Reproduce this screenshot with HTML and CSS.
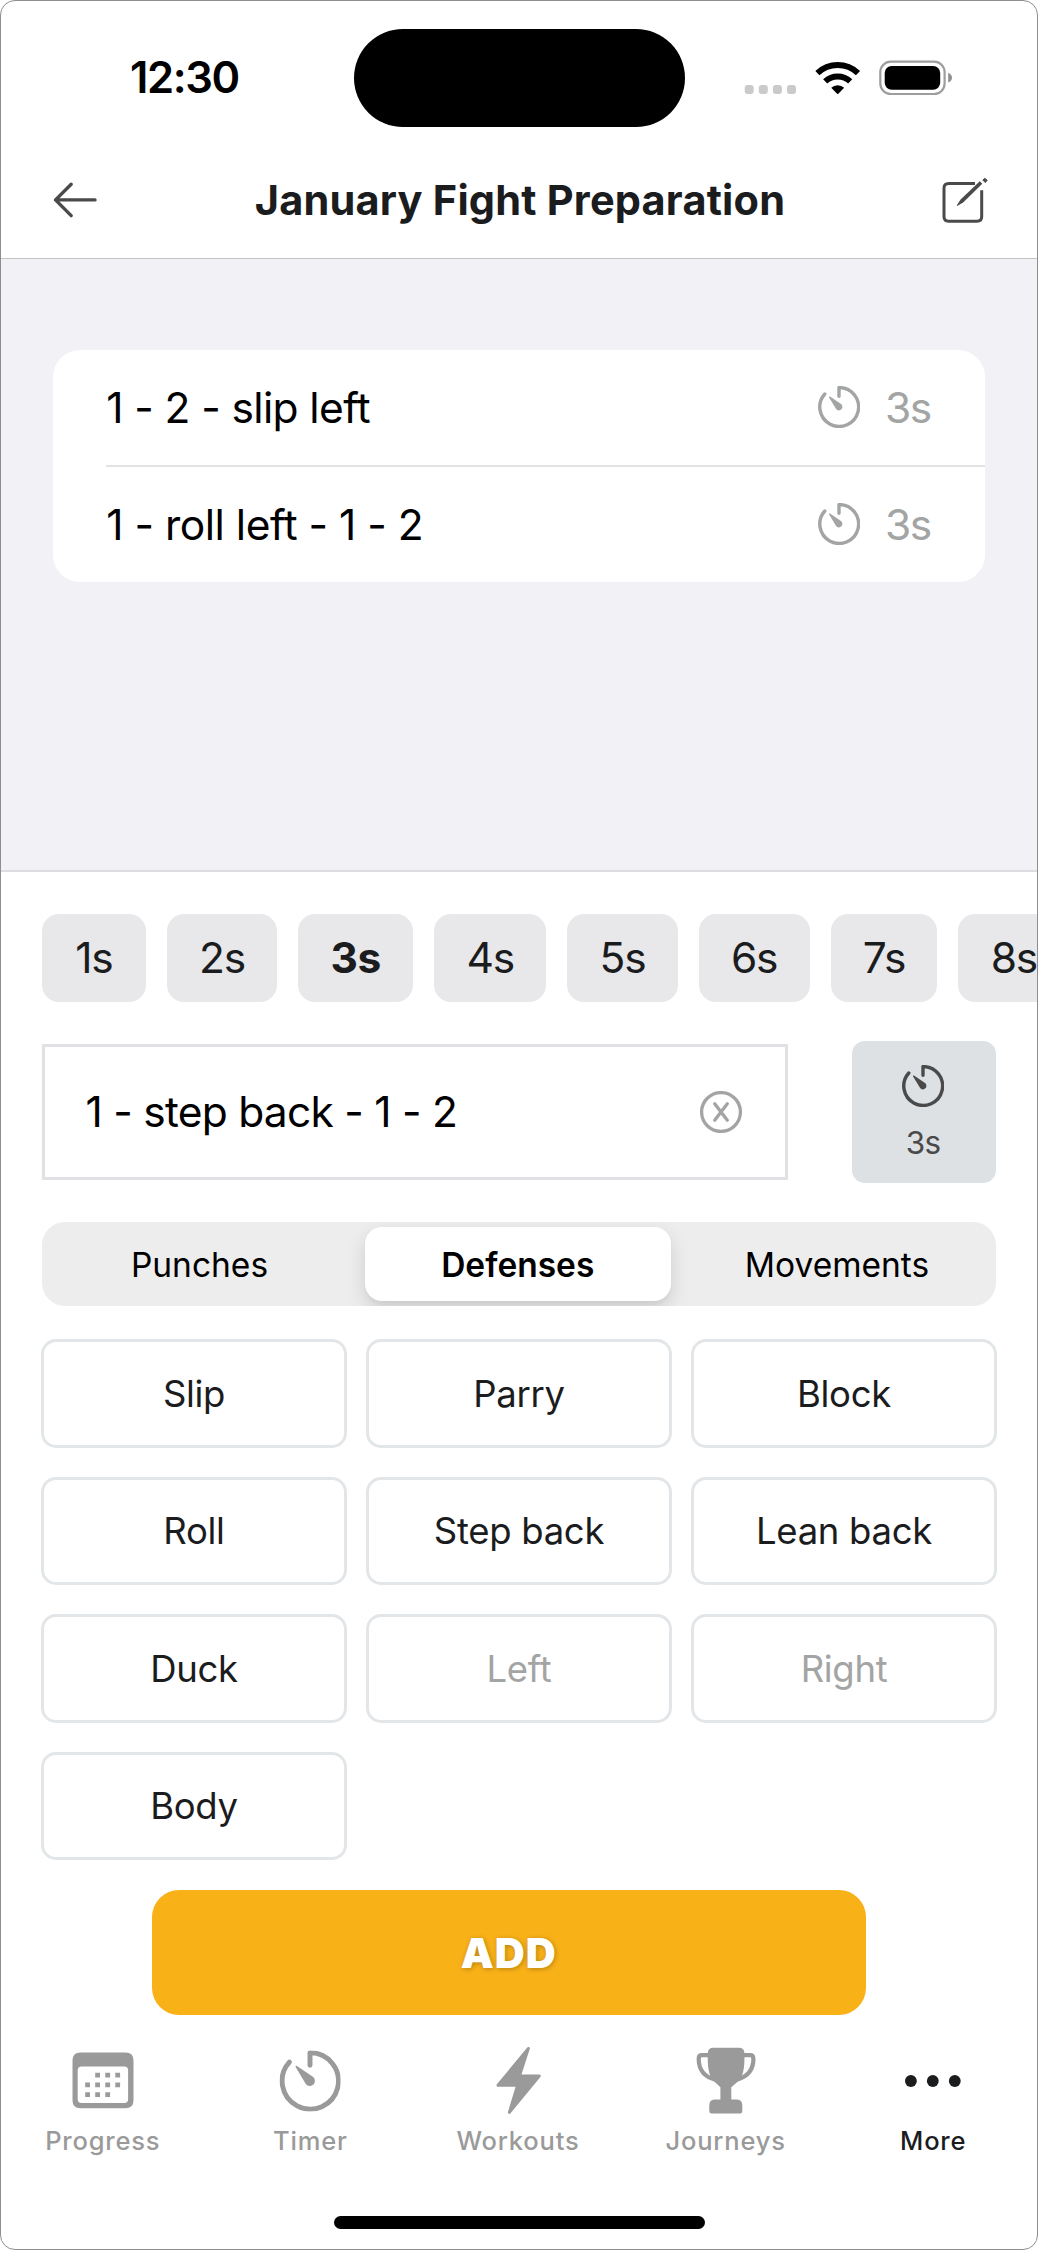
FILE: index.html
```
<!DOCTYPE html>
<html lang="en">
<head>
<meta charset="utf-8">
<title>January Fight Preparation</title>
<link rel="stylesheet" href="styles.css">
</head>
<body>
<svg width="0" height="0" class="defs">
  <symbol id="timer" viewBox="-21 -21 42 42">
    <path d="M0 -10.8V-19.4A19.4 19.4 0 1 1 -14.2 -13" fill="none" stroke="currentColor" stroke-width="3.4" stroke-linecap="round" stroke-linejoin="round"/>
    <path d="M-9.9 -9.6C-10.2 -10.2 -9.6 -10.8 -9 -10.4L2 -2.9A3.5 3.5 0 1 1 -2.9 2Z" fill="currentColor"/>
  </symbol>
</svg>
<div class="phone">
  <header class="status">
    <span class="time">12:30</span>
    <span class="island"></span>
    <svg class="status-icons" viewBox="744 58 210 38" width="210" height="38">
      <g fill="#cacaca">
        <rect x="744.7" y="84" width="9" height="9" rx="3"/><rect x="758.8" y="84" width="9" height="9" rx="3"/><rect x="772.9" y="84" width="9" height="9" rx="3"/><rect x="787" y="84" width="9" height="9" rx="3"/>
      </g>
      <g fill="none" stroke="#000" stroke-width="6">
        <path d="M817.4 72.1A29.5 29.5 0 0 1 858 72.1"/>
        <path d="M825.2 80.4A18.3 18.3 0 0 1 850.2 80.4"/>
      </g>
      <path d="M831.2 86.8A9.4 9.4 0 0 1 844.2 86.8L838.3 92.7Q837.7 93.3 837.1 92.7Z"/>
      <rect x="880.3" y="60.6" width="64.3" height="32.4" rx="10.5" fill="none" stroke="#9d9d9d" stroke-width="2.2"/>
      <rect x="884.7" y="65" width="55.5" height="23.8" rx="7"/>
      <path d="M948.2 71.8Q952 73.6 952 76.7Q952 79.8 948.2 81.6Z" fill="#8f8f8f"/>
    </svg>
  </header>

  <nav class="navbar">
    <svg class="back" viewBox="0 0 46 38" width="46" height="38"><path d="M18.2 3.2L2.5 18.9L18.2 34.6M2.5 18.9H42" fill="none" stroke="#4a4a4a" stroke-width="3.4" stroke-linecap="round" stroke-linejoin="round"/></svg>
    <h1>January Fight Preparation</h1>
    <svg class="edit" viewBox="0 0 48 48" width="48" height="48">
      <path d="M34 6.6H7.7Q3 6.6 3 11.3V39.6Q3 44.3 7.7 44.3H36Q40.7 44.3 40.7 39.6V13.3" fill="none" stroke="#4a4a4a" stroke-width="3"/>
      <path d="M38.8 4.3L41.3 6.8L22.4 25.2L16.2 28.9Q15.7 28.8 16 28.1L19.6 22.6Z" fill="#4a4a4a"/>
      <path d="M41.8 3.1L43.6 1.3L46.2 3.2L44.3 5.6Z" fill="#4a4a4a" stroke="#4a4a4a" stroke-width="1" stroke-linejoin="round"/>
    </svg>
  </nav>

  <main class="combos">
    <ul class="card">
      <li class="combo"><span>1 - 2 - slip left</span><svg class="clock"><use href="#timer"/></svg><span class="secs">3s</span></li>
      <li class="combo"><span class="tight">1 - roll left - 1 - 2</span><svg class="clock"><use href="#timer"/></svg><span class="secs">3s</span></li>
    </ul>
  </main>

  <section class="composer">
    <div class="chips">
      <button class="chip w104">1s</button><button class="chip w110">2s</button><button class="chip w115 on">3s</button><button class="chip w112">4s</button><button class="chip w110">5s</button><button class="chip w111">6s</button><button class="chip w107">7s</button><button class="chip w111">8s</button>
    </div>
    <div class="entry">
      <div class="field">
        <span>1 - step back - 1 - 2</span>
        <svg viewBox="-21 -21 42 42" width="42" height="42"><g fill="none" stroke="#a3a4a4" stroke-width="3.3" stroke-linecap="round"><circle r="19.4"/><path d="M-6.3 -8.2L6.3 8.2M6.3 -8.2L-6.3 8.2"/></g></svg>
      </div>
      <button class="duration"><svg class="clock"><use href="#timer"/></svg><span>3s</span></button>
    </div>
    <div class="segment">
      <span class="first">Punches</span><span class="active">Defenses</span><span>Movements</span>
    </div>
    <div class="moves">
      <button>Slip</button><button>Parry</button><button>Block</button>
      <button>Roll</button><button>Step back</button><button>Lean back</button>
      <button>Duck</button><button disabled>Left</button><button disabled>Right</button>
      <button>Body</button>
    </div>
    <button class="add">ADD</button>
  </section>

  <footer class="tabs">
    <div class="tab">
      <svg viewBox="0 0 70 70" width="70" height="70">
        <path fill-rule="evenodd" d="M12.5 6.5H57.5Q65.5 6.5 65.5 14.5V54.2Q65.5 62.2 57.5 62.2H12.5Q4.5 62.2 4.5 54.2V14.5Q4.5 6.5 12.5 6.5ZM13.5 20.5Q9.7 20.5 9.7 24.3V53.2Q9.7 57 13.5 57H56.3Q60.1 57 60.1 53.2V24.3Q60.1 20.5 56.3 20.5Z"/>
        <path d="M27.2 26.7h4.8v4.8h-4.8zM37.3 26.7h4.8v4.8h-4.8zM47.3 26.7h4.8v4.8h-4.8zM17.2 36.4h4.8v4.8h-4.8zM27.2 36.4h4.8v4.8h-4.8zM37.3 36.4h4.8v4.8h-4.8zM47.3 36.4h4.8v4.8h-4.8zM17.2 46.3h4.8v4.8h-4.8zM27.2 46.3h4.8v4.8h-4.8zM37.3 46.3h4.8v4.8h-4.8z"/>
      </svg>
      <span>Progress</span>
    </div>
    <div class="tab"><svg viewBox="-24.1 -24.1 48.2 48.2" width="70" height="70"><use href="#timer" x="-21" y="-21" width="42" height="42"/></svg><span>Timer</span></div>
    <div class="tab">
      <svg viewBox="0 0 70 70" width="70" height="70"><path stroke="currentColor" stroke-width="3" stroke-linejoin="round" d="M45.4 2.4L15 39.3H34.6L26.4 66.4L56.2 30H36.4Z"/></svg>
      <span>Workouts</span>
    </div>
    <div class="tab">
      <svg viewBox="0 0 70 70" width="70" height="70">
        <path d="M22.3 1.8H47.9Q53 1.8 53.4 6.8C53.7 18 53.2 29 48 34.5L40.3 41.2V53.6H46Q51.3 53.9 51.3 59.4V65.3Q51.3 67.5 49.1 67.5H20.5Q18.3 67.5 18.3 65.3V59.4Q18.3 53.9 23.6 53.6H29.4V41.2L22.2 34.5C17 29 16.5 18 16.8 6.8Q17.2 1.8 22.3 1.8Z"/>
        <path fill="none" stroke="currentColor" stroke-width="4.2" d="M17.5 9.2H11Q7.8 9.2 7.7 12.6C7.6 24 13 30.8 24.5 33.8M52.7 9.2H59.2Q62.2 9.2 62.4 12.6C62.5 24 57 30.8 45.7 33.8"/>
      </svg>
      <span>Journeys</span>
    </div>
    <div class="tab current">
      <svg viewBox="0 0 70 70" width="70" height="70"><circle cx="12.9" cy="35" r="5.9"/><circle cx="34.8" cy="35" r="5.9"/><circle cx="56.8" cy="35" r="5.9"/></svg>
      <span>More</span>
    </div>
  </footer>
  <div class="home"></div>
</div>
</body>
</html>
```
FILE: styles.css
```
* { box-sizing: border-box; margin: 0; padding: 0; }
body { background: #fff; font-family: Inter, "Liberation Sans", sans-serif; color: #1b1c1e; }
button { font: inherit; color: inherit; border: 0; background: none; }
svg { flex: none; display: block; }
.defs { position: absolute; }

.phone {
  width: 1038px; height: 2250px;
  border: 1px solid #8e8e90; border-radius: 15px;
  overflow: hidden; background: #fff;
  display: flex; flex-direction: column;
}

/* status bar */
.status { height: 142px; padding: 11px 83px 0 0; display: flex; align-items: center; flex: none; }
.time { width: 352.5px; padding: 0 0 2px 129px; font-size: 43.5px; font-weight: 600; letter-spacing: -1.4px; color: #000; }
.island { width: 331px; height: 98px; border-radius: 49px; background: #000; }
.status-icons { margin-left: auto; }

/* title bar */
.navbar {
  height: 115.6px; flex: none; display: flex; align-items: center; justify-content: space-between;
  padding: 0 48px 0 52px; border-bottom: 1.6px solid #c4c4c6;
}
.navbar h1 { font-size: 41.5px; font-weight: 700; letter-spacing: 0.2px; line-height: 1; padding-top: 1px; }
.edit { margin-top: 2px; }

/* saved combos */
.combos { height: 613.4px; flex: none; background: #f2f1f6; border-bottom: 2px solid #dcdde1; padding: 91.4px 52px 0 52.3px; }
.card { list-style: none; background: #fff; border-radius: 27px; height: 232.3px; overflow: hidden; padding-left: 53px; }
.combo {
  height: 115px; display: flex; align-items: center; padding-right: 54.5px;
  font-size: 42.5px; letter-spacing: -0.62px; color: #000;
}
.combo + .combo { border-top: 2px solid #e2e2e3; height: 117px; }
.combo .tight { letter-spacing: -0.5px; }
.clock { width: 42px; height: 42px; }
.combo .clock { margin-left: auto; color: #a3a4a4; }
.secs { color: #a3a4a4; letter-spacing: -1.6px; margin-left: 25.5px; }

/* composer */
.composer { padding: 42px 41px 0; flex: none; display: flex; flex-direction: column; height: 1174px; }
.chips { display: flex; gap: 21px; margin-right: -41px; overflow: hidden; }
.chip { height: 88px; flex: none; border-radius: 17px; background: #e8e8ea; font-size: 42.5px; letter-spacing: -1.2px; }
.chip.on { font-weight: 700; letter-spacing: -0.4px; }
.w104 { width: 103.9px; } .w107 { width: 106.7px; } .w110 { width: 110.4px; }
.w111 { width: 111px; } .w112 { width: 112.2px; } .w115 { width: 114.8px; }

.entry { display: flex; align-items: center; justify-content: space-between; margin-top: 39px; height: 142px; }
.field {
  width: 746px; height: 136px; border: 3px solid #dfe1e4; padding: 0 43px 0 40.5px;
  display: flex; align-items: center; justify-content: space-between;
  font-size: 42.5px; letter-spacing: -0.75px; color: #000;
}
.duration {
  width: 144.5px; height: 142px; border-radius: 13px; background: #dde1e4; color: #4a4a4a;
  display: flex; flex-direction: column; align-items: center; padding: 24px 1.5px 0 0; gap: 16px;
  font-size: 31.5px; line-height: 40px; letter-spacing: -0.8px;
}

.segment {
  height: 84.5px; margin-top: 39px; border-radius: 23px; background: #ededed; overflow: hidden;
  display: grid; grid-template-columns: repeat(3, 1fr); font-size: 33.5px; color: #000;
}
.segment span { display: flex; align-items: center; justify-content: center; padding-top: 1px; }
.segment .first { padding-right: 3px; }
.segment .active { margin: 5px 7px 5px 4.5px; border-radius: 17px; background: #fff; font-weight: 600; box-shadow: 0 8px 20px rgba(0, 0, 0, .13), 0 4px 3px rgba(0, 0, 0, .03); }

.moves {
  margin: 32.8px -1px 0; display: grid; grid-template-columns: repeat(3, 1fr);
  grid-auto-rows: 108.3px; gap: 29.2px 19px; font-size: 36.5px; letter-spacing: -0.3px;
}
.moves button { border: 3px solid #e3e6e8; border-radius: 15px; letter-spacing: inherit; padding-top: 1px; }
.moves button:disabled { color: #a3a4a4; }

.add {
  margin: 30px 0 0 110px; width: 713.7px; height: 125.4px; border-radius: 27px; background: #f9b118; flex: none;
  color: #fff; font-size: 41.5px; font-weight: 900; letter-spacing: 1px; text-shadow: 1px 1px 5px rgba(0, 0, 0, .28);
}

/* tab bar */
.tabs { display: grid; grid-template-columns: repeat(5, 1fr); flex: none; margin-left: -2px; }
.tab { display: flex; flex-direction: column; align-items: center; gap: 10px; color: #9a9a9a; fill: currentColor; font-size: 25.5px; font-weight: 500; line-height: 30px; letter-spacing: 0.8px; }
.tab.current { color: #1b1c1e; }
.home { width: 371px; height: 13px; border-radius: 7px; background: #000; margin: 59.7px auto 0; flex: none; }
```
